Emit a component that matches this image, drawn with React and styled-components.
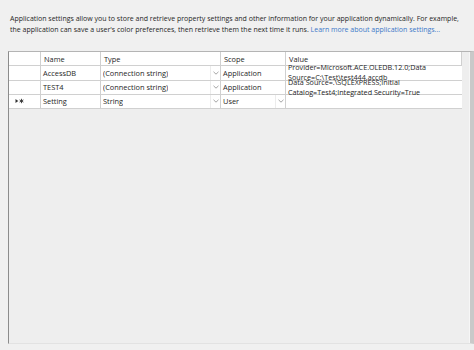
import styled, { createGlobalStyle } from "styled-components";

const GlobalStyle = createGlobalStyle`
	html, body {
		margin: 0;
		padding: 0;
		background: #f0f0f0;
	}
	body {
		font-family: "Open Sans", "Noto Sans", sans-serif;
		color: #1e1e1e;
	}
`;

const columns = "32px 60px 120px 65px 1fr";

const rows = [
	{
		newRow: false,
		name: "AccessDB",
		type: "(Connection string)",
		scope: "Application",
		value: ["Provider=Microsoft.ACE.OLEDB.12.0;Data", "Source=C:\\Test\\test444.accdb"],
	},
	{
		newRow: false,
		name: "TEST4",
		type: "(Connection string)",
		scope: "Application",
		value: ["Data Source=.\\SQLEXPRESS;Initial", "Catalog=Test4;Integrated Security=True"],
	},
	{
		newRow: true,
		name: "Setting",
		type: "String",
		scope: "User",
		scopeDrop: true,
		value: [],
	},
];

function App() {
	return (
		<>
			<GlobalStyle />
			<Page>
				<Intro>
					<Line>
						Application settings allow you to store and retrieve property settings and other
						information for your application dynamically. For example,
					</Line>
					<Line>
						the application can save a user's color preferences, then retrieve them the next
						time it runs. <Link>Learn more about application settings...</Link>
					</Line>
				</Intro>
				<Frame>
					<Grid>
						<Row>
							<Cell />
							<HeadCell>Name</HeadCell>
							<HeadCell>Type</HeadCell>
							<HeadCell>Scope</HeadCell>
							<HeadCell>Value</HeadCell>
						</Row>
						{rows.map((r) => (
							<Row key={r.name}>
								<Cell>{r.newRow && <NewRowMarker />}</Cell>
								<Cell>{r.name}</Cell>
								<DropCell>
									<span>{r.type}</span>
									<Chevron />
								</DropCell>
								{r.scopeDrop ? (
									<DropCell>
										<span>{r.scope}</span>
										<Chevron />
									</DropCell>
								) : (
									<Cell>{r.scope}</Cell>
								)}
								<ValueCell>
									{r.value.length > 0 && (
										<ValueText>
											{r.value.map((v) => (
												<div key={v}>{v}</div>
											))}
										</ValueText>
									)}
								</ValueCell>
							</Row>
						))}
					</Grid>
				</Frame>
			</Page>
		</>
	);
}

export default App;

const Chevron = () => (
	<ArrowBox>
		<svg width="6" height="4" viewBox="0 0 6 4">
			<path d="M0.5 0.8 L3 3.2 L5.5 0.8" fill="none" stroke="#9a9a9a" strokeWidth="0.9" />
		</svg>
	</ArrowBox>
);

const NewRowMarker = () => (
	<MarkerBox>
		<svg width="9" height="6" viewBox="0 0 9 6">
			<path d="M0.5 1 L3.3 3 L0.5 5 Z" fill="#333" />
			<path d="M6.5 0.8 V5.2 M4.6 1.9 L8.4 4.1 M4.6 4.1 L8.4 1.9" stroke="#333" strokeWidth="0.9" />
		</svg>
	</MarkerBox>
);

const Page = styled.div`
	width: 474px;
	height: 350px;
	box-sizing: border-box;
	padding: 13px 0 6px 8px;
	display: flex;
	flex-direction: column;
	gap: 16px;
	overflow: hidden;
`;

const Intro = styled.div`
	padding-left: 2px;
	font-size: 7px;
	line-height: 11px;
	color: #262626;
`;

const Line = styled.div`
	white-space: nowrap;
`;

const Link = styled.span`
	color: #3c78c8;
`;

const Frame = styled.div`
	flex: 1;
	display: flex;
	border-top: 1px solid #b4b4b4;
	border-left: 1px solid #8c8c8c;
	border-bottom: 1px solid #e2e2e2;
	background: #eeeeee;
	border-right: 4px solid #c9c9c9;
	box-shadow: inset -1px 0 0 #f6f6f6;
`;

const Grid = styled.div`
	flex: 1;
	display: flex;
	flex-direction: column;
	margin-right: 8px;
`;

const Row = styled.div`
	display: grid;
	grid-template-columns: ${columns};
	height: 13.25px;
	background: #ffffff;
	border-bottom: 1px solid #d0d0d0;
	box-sizing: content-box;
`;

const Cell = styled.div`
	display: flex;
	align-items: center;
	padding-left: 2px;
	font-size: 7.4px;
	color: #262626;
	border-right: 1px solid #d0d0d0;
	white-space: nowrap;
	overflow: hidden;
`;

const HeadCell = styled(Cell)`
	padding-left: 3px;
`;

const MarkerBox = styled.div`
	padding-left: 4px;
	display: flex;
	align-items: center;
`;

const DropCell = styled(Cell)`
	justify-content: space-between;
	span {
		overflow: hidden;
	}
`;

const ArrowBox = styled.div`
	width: 9px;
	height: 100%;
	display: flex;
	align-items: center;
	justify-content: center;
	border-left: 1px solid #ececec;
	flex-shrink: 0;
`;

const ValueCell = styled(Cell)`
	position: relative;
	overflow: visible;
	border-right: none;
`;

const ValueText = styled.div`
	position: absolute;
	left: 2px;
	top: -4px;
	font-size: 7.2px;
	line-height: 10px;
	color: #262626;
`;
